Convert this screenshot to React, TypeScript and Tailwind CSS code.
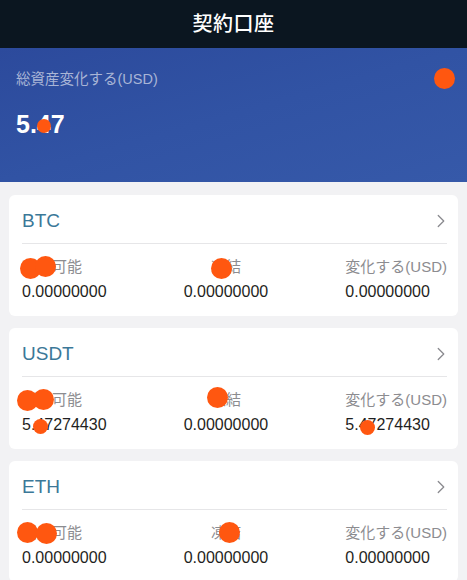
import { ChevronRight } from 'lucide-react';

const FONT = { fontFamily: '"Liberation Sans", "Noto Sans CJK JP", sans-serif' };

type Account = { coin: string; avail: string; frozen: string; usd: string };

const ACCOUNTS: Account[] = [
  { coin: 'BTC', avail: '0.00000000', frozen: '0.00000000', usd: '0.00000000' },
  { coin: 'USDT', avail: '5.47274430', frozen: '0.00000000', usd: '5.47274430' },
  { coin: 'ETH', avail: '0.00000000', frozen: '0.00000000', usd: '0.00000000' },
];

// redaction dots that sit over the screenshot: [x, y, size]
const DOTS: [number, number, number][] = [
  [444, 78, 21],
  [44, 126, 14],
  [30, 268, 21],
  [45, 266, 21],
  [221, 268, 21],
  [27, 400, 21],
  [43, 399, 21],
  [217, 397, 21],
  [40, 426, 15],
  [367, 427, 15],
  [27, 532, 21],
  [46, 533, 21],
  [229, 532, 21],
];

function AccountCard({ a }: { a: Account }) {
  return (
    <div className="rounded-md bg-white pl-[13px] pr-[11px]">
      <div className="flex h-[49px] items-center justify-between border-b border-[#e6e6e8] pt-[4px]">
        <div className="text-[19px] font-medium text-[#3b7898]">{a.coin}</div>
        <ChevronRight className="-mr-[5px] h-[22px] w-[22px] text-[#8a8a8f]" strokeWidth={1.4} />
      </div>
      <div className="flex justify-between pb-[13px] pt-[12px]">
        <div className="flex flex-col">
          <div className="text-[15px] leading-[22px] text-[#8c8c90]">利用可能</div>
          <div className="mt-[3px] text-[16px] leading-[22px] text-[#1f1f22]">{a.avail}</div>
        </div>
        <div className="flex flex-col items-center">
          <div className="text-[15px] leading-[22px] text-[#8c8c90]">凍結</div>
          <div className="mt-[3px] text-[16px] leading-[22px] text-[#1f1f22]">{a.frozen}</div>
        </div>
        <div className="flex flex-col">
          <div className="text-[15px] leading-[22px] text-[#8c8c90]">変化する(USD)</div>
          <div className="mt-[3px] text-[16px] leading-[22px] text-[#1f1f22]">{a.usd}</div>
        </div>
      </div>
    </div>
  );
}

export default function App() {
  return (
    <div className="relative h-[580px] w-[467px] overflow-hidden bg-[#f2f2f4]" style={FONT}>
      <div className="flex h-[48px] items-center justify-center bg-[#0b1620]">
        <div className="text-[20px] font-medium tracking-wide text-white">契約口座</div>
      </div>
      <div className="h-[134px] bg-gradient-to-br from-[#2c4a9c] via-[#3153a4] to-[#3659a9] px-4 pt-[21px]">
        <div className="text-[14.5px] text-[#a9b5d6]">総資産変化する(USD)</div>
        <div className="mt-[15px] text-[25px] font-semibold text-white">5.47</div>
      </div>
      <div className="flex flex-col gap-3 px-[9px] pt-[13px]">
        {ACCOUNTS.map((a) => (
          <AccountCard key={a.coin} a={a} />
        ))}
      </div>
      {DOTS.map(([x, y, s], i) => (
        <div
          key={i}
          className="absolute rounded-full bg-[#ff5710]"
          style={{ left: x - s / 2, top: y - s / 2, width: s, height: s }}
        />
      ))}
    </div>
  );
}
